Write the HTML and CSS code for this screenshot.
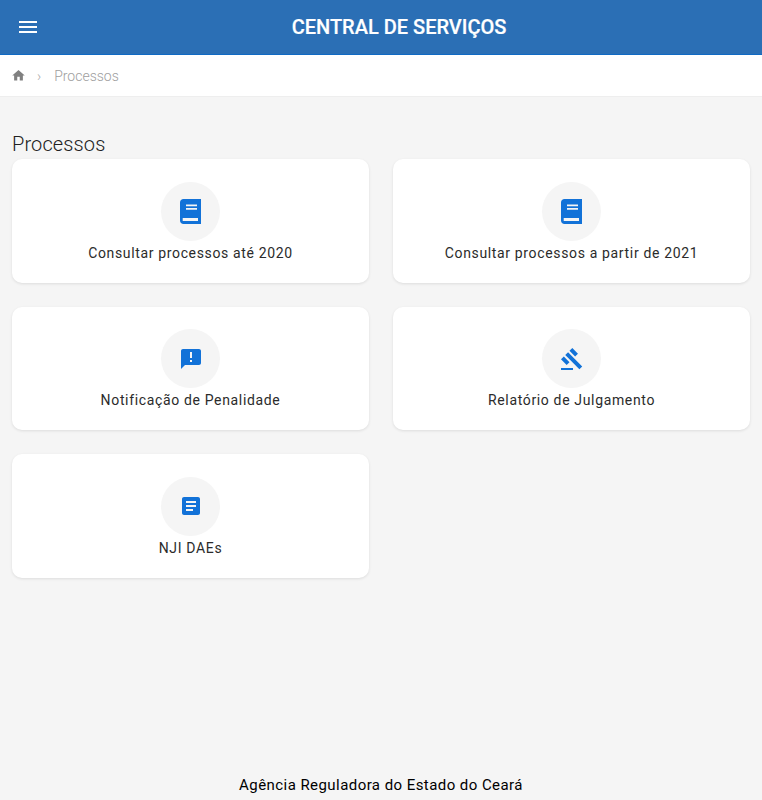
FILE: index.html
```html
<!DOCTYPE html>
<html lang="pt-BR">
<head>
<meta charset="utf-8">
<title>Central de Serviços</title>
<link rel="stylesheet" href="styles.css">
</head>
<body>
<div class="page">
  <header class="topbar">
    <button class="menu-btn" aria-label="Menu">
      <svg class="menu-icon" viewBox="0 0 24 24"><path d="M3 18h18v-2H3v2zm0-5h18v-2H3v2zm0-7v2h18V6H3z"/></svg>
    </button>
    <h1 class="topbar-title">CENTRAL DE SERVIÇOS</h1>
  </header>
  <nav class="crumbs">
    <svg class="home-icon" viewBox="0 0 24 24"><path d="M10 20v-6h4v6h5v-8h3L12 3 2 12h3v8z"/></svg>
    <span class="crumb-sep">›</span>
    <span class="crumb-current">Processos</span>
  </nav>
  <main class="content">
    <h2 class="section-title">Processos</h2>
    <div class="card-grid">
      <a class="card">
        <span class="icon-circle">
          <svg class="icon-book" viewBox="0 0 21 25"><path d="M3.500 0H21v25H3.500C1.500 25 0 23.500 0 21.500V3.500C0 1.500 1.500 0 3.500 0zM6 5.500v1.700h11V5.500H6zm0 3.500v1.800h11V9H6zM2.700 19v3H18v-3H2.700z" fill-rule="evenodd"/></svg>
        </span>
        <span class="card-label">Consultar processos até 2020</span>
      </a>
      <a class="card">
        <span class="icon-circle">
          <svg class="icon-book" viewBox="0 0 21 25"><path d="M3.500 0H21v25H3.500C1.500 25 0 23.500 0 21.500V3.500C0 1.500 1.500 0 3.500 0zM6 5.500v1.700h11V5.500H6zm0 3.500v1.800h11V9H6zM2.700 19v3H18v-3H2.700z" fill-rule="evenodd"/></svg>
        </span>
        <span class="card-label">Consultar processos a partir de 2021</span>
      </a>
      <a class="card">
        <span class="icon-circle">
          <svg class="icon" viewBox="0 0 24 24"><path d="M20 2H4c-1.100 0-1.990.9-1.990 2L2 22l4-4h14c1.100 0 2-.9 2-2V4c0-1.100-.9-2-2-2zm-7 9h-2V5h2v6zm0 4h-2v-2h2v2z"/></svg>
        </span>
        <span class="card-label">Notificação de Penalidade</span>
      </a>
      <a class="card">
        <span class="icon-circle">
          <svg class="icon" viewBox="0 0 24 24"><path d="M1 21h12v2H1zM5.245 8.070l2.830-2.827 14.140 14.142-2.828 2.828zM12.317 1l5.657 5.656-2.830 2.830-5.654-5.660zM3.825 9.485l5.657 5.657-2.828 2.828-5.657-5.657z"/></svg>
        </span>
        <span class="card-label">Relatório de Julgamento</span>
      </a>
      <a class="card">
        <span class="icon-circle">
          <svg class="icon" viewBox="0 0 24 24"><path d="M19 3H5c-1.100 0-2 .9-2 2v14c0 1.100.9 2 2 2h14c1.100 0 2-.9 2-2V5c0-1.100-.9-2-2-2zm-5 14H7v-2h7v2zm3-4H7v-2h10v2zm0-4H7V7h10v2z"/></svg>
        </span>
        <span class="card-label">NJI DAEs</span>
      </a>
    </div>
  </main>
  <footer class="footer">Agência Reguladora do Estado do Ceará</footer>
</div>
</body>
</html>
```
FILE: styles.css
```css
* { box-sizing: border-box; }
html, body { margin: 0; padding: 0; height: 100%; }
body {
  background: #f5f5f5;
  font-family: Roboto, "Liberation Sans", sans-serif;
  color: #212121;
  overflow: hidden;
}
.page { display: flex; flex-direction: column; height: 800px; }
.topbar {
  height: 55px;
  flex: none;
  background: #2b6fb5;
  border-bottom: 1px solid #0f6ac4;
  display: flex;
  align-items: center;
  position: relative;
  padding-left: 16px;
}
.menu-btn { background: none; border: 0; padding: 0; width: 24px; height: 24px; display: block; }
.menu-icon { display: block; width: 24px; height: 24px; fill: #fff; }
.topbar-title {
  flex: 1;
  margin: 0;
  padding-right: 4px;
  text-align: center;
  color: #fff;
  font-size: 20px;
  font-weight: 500;
  line-height: 24px;
  -webkit-text-stroke: .2px #fff;
}
.crumbs {
  height: 42px;
  flex: none;
  background: #fff;
  border-bottom: 1px solid #eeeeee;
  display: flex;
  align-items: center;
  padding-left: 10.500px;
}
.home-icon { width: 15px; height: 15px; fill: #808080; flex: none; }
.crumb-sep { margin-left: 11.500px; color: #a8a8a8; font-size: 14px; font-weight: 300; }
.crumb-current { margin-left: 13px; color: #a0a0a0; font-size: 14px; font-weight: 300; }
.content { flex: 1; padding: 35px 12px 0; }
.section-title {
  margin: 0 0 2px;
  font-size: 20px;
  font-weight: 300;
  line-height: 25px;
  letter-spacing: .12px;
  color: #212121;
}
.card-grid {
  display: grid;
  grid-template-columns: 1fr 1fr;
  grid-auto-rows: 123.500px;
  gap: 24px;
}
.card {
  background: #fff;
  border-radius: 10px;
  box-shadow: 0 1px 3px rgba(0,0,0,.1);
  display: flex;
  flex-direction: column;
  align-items: center;
  padding-top: 22.500px;
}
.icon-circle {
  width: 59px;
  height: 59px;
  border-radius: 50%;
  background: #f5f5f5;
  display: flex;
  align-items: center;
  justify-content: center;
  flex: none;
}
.icon { width: 24px; height: 24px; fill: #1272d8; }
.icon-book { width: 21px; height: 25px; fill: #1272d8; }
.card-label {
  margin-top: 2px;
  font-size: 14px;
  line-height: 20px;
  letter-spacing: .65px;
  color: #2b2b2b;
}
.footer {
  flex: none;
  height: 30px;
  padding-top: 6px;
  text-align: center;
  font-size: 15px;
  line-height: 18px;
  letter-spacing: .44px;
  color: #000;
}
```
